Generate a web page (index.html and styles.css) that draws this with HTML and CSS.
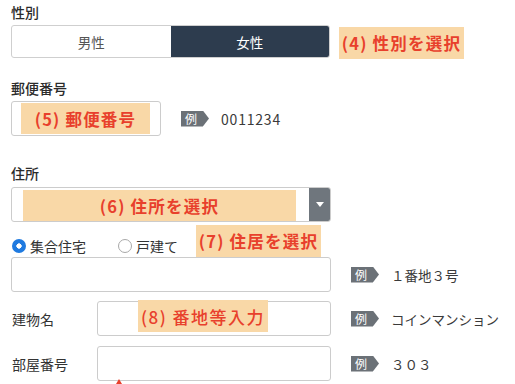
FILE: index.html
```html
<!DOCTYPE html>
<html lang="ja">
<head>
<meta charset="utf-8">
<link rel="stylesheet" href="styles.css">
</head>
<body>
<div class="form">
  <div class="label">性別</div>
  <div class="seg">
    <div class="seg-item">男性</div>
    <div class="seg-item active">女性</div>
    <div class="note note4">(4) 性別を選択</div>
  </div>

  <div class="label sec">郵便番号</div>
  <div class="row postal">
    <div class="field field-postal">
      <div class="note note5">(5) 郵便番号</div>
    </div>
    <div class="example"><span class="badge">例</span><span class="ex-text digits">0011234</span></div>
  </div>

  <div class="label sec2">住所</div>
  <div class="select">
    <div class="select-btn"><span class="tri"></span></div>
    <div class="note note6">(6) 住所を選択</div>
  </div>

  <div class="radios">
    <label class="radio"><span class="dot on"></span>集合住宅</label>
    <label class="radio second"><span class="dot"></span>戸建て</label>
    <div class="note note7">(7) 住居を選択</div>
  </div>

  <div class="row addr">
    <div class="field field-full"></div>
    <div class="example"><span class="badge">例</span><span class="ex-text">１番地３号</span></div>
  </div>

  <div class="row sub first">
    <div class="sub-label">建物名</div>
    <div class="field field-sub">
      <div class="note note8">(8) 番地等入力</div>
    </div>
    <div class="example"><span class="badge">例</span><span class="ex-text">コインマンション</span></div>
  </div>

  <div class="row sub second-row">
    <div class="sub-label">部屋番号</div>
    <div class="field field-sub">
      <span class="arrow"></span>
    </div>
    <div class="example"><span class="badge">例</span><span class="ex-text">３０３</span></div>
  </div>
</div>
</body>
</html>
```

FILE: styles.css
```css
* { box-sizing: border-box; }
html, body { margin: 0; padding: 0; background: #fff; }
body {
  font-family: "Noto Sans CJK JP", "Noto Sans", sans-serif;
  font-size: 13.5px;
  color: #333;
  width: 515px;
  height: 384px;
  overflow: hidden;
}
.form { padding: 3px 0 0 11px; }

.label { height: 18px; line-height: 18px; color: #2b2b2b; font-size: 14px; font-weight: 500; }
.label.sec { margin-top: 21px; }
.label.sec2 { margin-top: 28px; }

.seg {
  position: relative;
  margin-top: 4px;
  width: 319px;
  height: 33px;
  display: flex;
  border: 1px solid #cfcfcf;
  border-radius: 3px;
}
.seg-item {
  flex: 1;
  display: flex;
  align-items: center;
  justify-content: center;
  color: #555;
}
.seg-item.active {
  background: #2d3c4e;
  color: #fff;
  border-radius: 0 2px 2px 0;
}

.note {
  position: absolute;
  background: #f9d8a7;
  color: #e8402c;
  font-weight: bold;
  font-size: 16.5px;
  letter-spacing: 1.2px;
  display: flex;
  align-items: center;
  justify-content: center;
  white-space: nowrap;
}
.note4 { left: 327px; top: 1px; width: 125px; height: 32px; }
.note5 { left: 9px; top: 1px; width: 129px; height: 31px; }
.note6 { left: 11px; top: 2px; width: 273px; height: 31px; }
.note7 { left: 185px; top: -11px; width: 125px; height: 32px; }
.note8 { left: 40px; top: -2px; width: 130px; height: 32px; font-weight: 500; font-size: 17px; letter-spacing: 1.5px; }

.row { display: flex; align-items: center; }
.postal { margin-top: 4px; }
.field {
  position: relative;
  height: 35px;
  border: 1px solid #cccccc;
  border-radius: 3px;
  background: #fff;
}
.field-postal { width: 150px; }
.field-full { width: 320px; }
.field-sub { width: 234px; }

.example { display: flex; align-items: center; margin-left: 20px; }
.badge {
  width: 28px;
  height: 16px;
  background: #6b7177;
  color: #fff;
  font-size: 12px;
  line-height: 16px;
  padding-left: 4px;
  clip-path: polygon(0 0, 78% 0, 100% 50%, 78% 100%, 0 100%);
}
.ex-text { margin-left: 12px; color: #3a3a3a; font-size: 13.5px; }
.ex-text.digits { letter-spacing: 0.8px; font-size: 14px; }

.select {
  position: relative;
  margin-top: 5px;
  width: 320px;
  height: 35px;
  border: 1px solid #cccccc;
  border-radius: 3px;
  display: flex;
  justify-content: flex-end;
}
.select-btn {
  width: 21px;
  background: #6f767d;
  border-radius: 0 2px 2px 0;
  display: flex;
  align-items: center;
  justify-content: center;
}
.tri {
  width: 0; height: 0;
  border-left: 4px solid transparent;
  border-right: 4px solid transparent;
  border-top: 5px solid #fff;
}

.radios {
  position: relative;
  margin-top: 14px;
  height: 20px;
  display: flex;
  align-items: center;
}
.radio { display: flex; align-items: center; color: #333; font-size: 14px; }
.radio.second { margin-left: 31px; }
.dot {
  width: 14px; height: 14px;
  border-radius: 50%;
  border: 1px solid #a8a8a8;
  margin: 0 4px 0 1px;
  background: #fff;
}
.dot.on {
  border: none;
  background: radial-gradient(circle, #fff 0 2.4px, #1f7ae0 2.9px);
}

.addr { margin-top: 1px; }
.sub.first { margin-top: 9px; }
.sub.second-row { margin-top: 10px; }
.sub-label { width: 86px; padding-left: 1px; color: #333; font-size: 14px; }

.arrow {
  position: absolute;
  left: 18px;
  top: 32px;
  width: 0; height: 0;
  border-left: 3px solid transparent;
  border-right: 3px solid transparent;
  border-bottom: 5px solid #e8402c;
}
```
